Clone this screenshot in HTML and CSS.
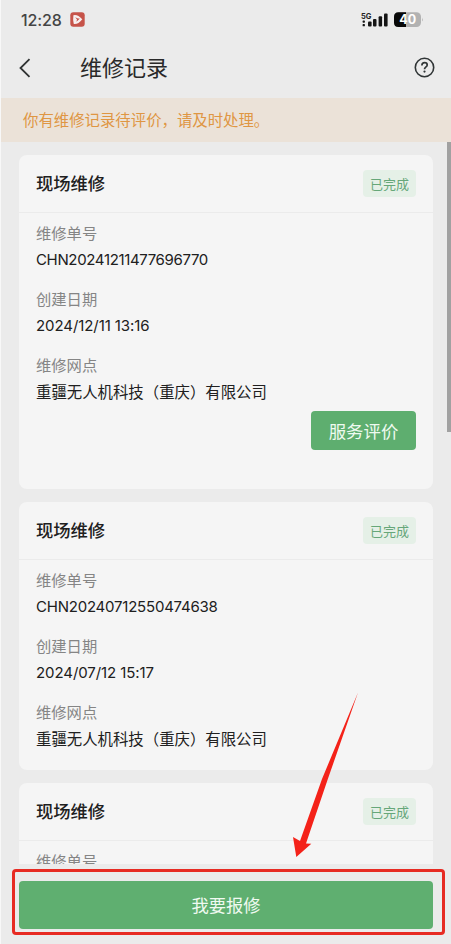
FILE: index.html
```html
<!DOCTYPE html>
<html lang="zh-CN">
<head>
<meta charset="utf-8">
<title>维修记录</title>
<link rel="stylesheet" href="styles.css">
</head>
<body>
<div class="screen">
  <div class="status">
    <span class="clock">12:28</span>
    <svg class="app-badge" width="15" height="15" viewBox="0 0 15 15"><rect x=".3" y=".3" width="14.4" height="14.4" rx="3" fill="#c65349"/><path d="M3.4 3.2Q7.5 2 12.3 7.2Q8 12.7 3.8 12Q2.7 7.4 3.4 3.2Z" fill="#f7eeee"/><path d="M5.2 5.3L8 6.6L9.8 6.5L8.4 7.9L6.4 9.8L7 7.5Z" fill="#c65349"/></svg>
    <svg class="signal" width="29" height="16" viewBox="0 0 29 16"><text x="0" y="7" class="network">5G</text><g fill="#151515"><rect x="1.6" y="8.5" width="2.3" height="2.2" rx=".6"/><rect x="1.6" y="12.1" width="2.3" height="2.2" rx=".6"/><rect x="7" y="9.5" width="3.6" height="5" rx="1"/><rect x="12" y="7" width="3.5" height="7.5" rx="1"/><rect x="17.6" y="4.3" width="3.5" height="10.2" rx="1"/><rect x="23" y="1.5" width="3.6" height="13" rx="1"/></g></svg>
    <svg class="battery" width="30" height="16" viewBox="0 0 30 16"><rect x="0" y=".3" width="27" height="14.7" rx="4.5" fill="#b2b2b2"/><path d="M4.5.3H12V15H4.5Q0 15 0 10.5V4.8Q0 .3 4.5.3Z" fill="#080808"/><path d="M28.1 5.5Q29.4 7.5 28.1 9.5Z" fill="#aaa"/><text x="13.8" y="12.1" class="charge">40</text></svg>
  </div>
  <header class="nav">
    <svg class="back" width="12" height="20" viewBox="0 0 12 20"><path d="M10.5 1.2L1.5 10L10.5 18.8" fill="none" stroke="#303333" stroke-width="1.8"/></svg>
    <h1>维修记录</h1>
    <svg class="help" width="21" height="21" viewBox="0 0 21 21" fill="none" stroke="#303536"><circle cx="10.5" cy="10.5" r="9.2" stroke-width="1.6"/><path d="M7.9 8.4Q7.9 5.7 10.6 5.7Q13.2 5.7 13.2 8Q13.2 9.3 11.8 10.1Q10.5 10.9 10.5 12.3" stroke-width="1.7"/><circle cx="10.5" cy="14.6" r="1.1" fill="#303536" stroke="none"/></svg>
  </header>
  <div class="notice">你有维修记录待评价，请及时处理。</div>
  <main class="list">
    <section class="card">
      <div class="card-head"><h2>现场维修</h2><span class="tag">已完成</span></div>
      <dl>
        <dt>维修单号</dt><dd class="num">CHN20241211477696770</dd>
        <dt>创建日期</dt><dd class="num date">2024/12/11 13:16</dd>
        <dt>维修网点</dt><dd>重疆无人机科技（重庆）有限公司</dd>
      </dl>
      <div class="actions"><button class="rate">服务评价</button></div>
    </section>
    <section class="card">
      <div class="card-head"><h2>现场维修</h2><span class="tag">已完成</span></div>
      <dl>
        <dt>维修单号</dt><dd class="num wide">CHN20240712550474638</dd>
        <dt>创建日期</dt><dd class="num date">2024/07/12 15:17</dd>
        <dt>维修网点</dt><dd>重疆无人机科技（重庆）有限公司</dd>
      </dl>
    </section>
    <section class="card">
      <div class="card-head"><h2>现场维修</h2><span class="tag">已完成</span></div>
      <dl><dt>维修单号</dt></dl>
    </section>
  </main>
  <footer class="bottom"><button class="report">我要报修</button></footer>
  <div class="scrollbar"></div>
  <div class="highlight"></div>
  <svg class="arrow" width="70" height="168" viewBox="0 0 70 168"><path d="M68 1.5L32 88L10 150L3 146L6.3 166L21.3 152.8L16 152.6L37.5 89Z" fill="#f42219"/></svg>
</div>
</body>
</html>
```
FILE: styles.css
```css
* { box-sizing: border-box; }
body { margin: 0; background: #ebebeb; font-family: "Noto Sans CJK SC", sans-serif; }
h1, h2, dl, dd { margin: 0; }
button { border: 0; padding: 0; font-family: inherit; }
.screen { position: relative; width: 451px; height: 944px; overflow: hidden; display: flex; flex-direction: column; border-left: 1px solid #f8f8f8; background: #ebebeb; }
.status { height: 39px; display: flex; align-items: center; padding-left: 20px; }
.clock { width: 42px; font: 500 16px/20px Inter, sans-serif; letter-spacing: -.1px; color: #444; white-space: nowrap; }
.app-badge { margin-left: 7px; }
.signal { margin-left: 276px; }
.network { font: 700 7.5px Inter, sans-serif; fill: #222; }
.battery { margin-left: 4px; }
.charge { font: 700 12.5px Inter, sans-serif; fill: #fff; text-anchor: middle; }
.nav { height: 59px; display: flex; align-items: center; padding: 0 16px 2px 18px; }
.nav h1 { margin-left: 49px; padding-bottom: 4px; font-size: 22px; line-height: 32px; font-weight: 400; color: #292929; }
.help { margin-left: auto; }
.notice { height: 44px; padding-left: 22px; background: #ebe2d8; color: #df9643; font-size: 15.4px; line-height: 43px; }
.list { height: 722px; padding: 13px 18px 0 18px; display: flex; flex-direction: column; gap: 13px; overflow: hidden; }
.card { flex: none; border-radius: 8px; background: #f5f5f5; }
.card-head { height: 58px; padding: 0 17px 1px 17px; border-bottom: 1px solid #ebebeb; display: flex; align-items: center; justify-content: space-between; }
.card h2 { font-size: 17.3px; line-height: 26px; font-weight: 500; color: #202020; }
.tag { width: 53px; height: 27px; border-radius: 4px; background: #e5f0e7; color: #66a779; font-size: 13px; line-height: 27px; text-align: center; }
dl { padding: 6px 17px 18px; }
dt { height: 26px; line-height: 26px; font-size: 15.3px; color: #858585; }
dd { height: 28px; line-height: 28px; font-size: 15.4px; color: #202020; white-space: nowrap; }
dd + dt { margin-top: 12px; }
.num { padding-top: 1px; font-family: Inter, sans-serif; font-size: 15px; letter-spacing: -.35px; }
.wide { letter-spacing: -.22px; }
.date { letter-spacing: -.08px; }
.actions { display: flex; justify-content: flex-end; margin-top: -12px; padding: 0 17px 39px 0; }
.rate { width: 105px; height: 39px; border-radius: 4px; background: #5eae6f; color: #eefaf0; font-size: 17.4px; line-height: 37px; }
.bottom { height: 80px; padding: 17px 18px 0 18px; background: #ebebeb; }
.report { display: block; width: 100%; height: 48px; border-radius: 4px; background: #5faf70; color: #f0faf1; font-size: 17.3px; line-height: 48px; }
.scrollbar { position: absolute; right: 0; top: 142px; width: 4px; height: 290px; background: #a1a1a1; }
.highlight { position: absolute; left: 11px; top: 869px; width: 433px; height: 66px; border: 3px solid #e72b23; border-radius: 4px; }
.arrow { position: absolute; left: 289px; top: 691px; }
```
